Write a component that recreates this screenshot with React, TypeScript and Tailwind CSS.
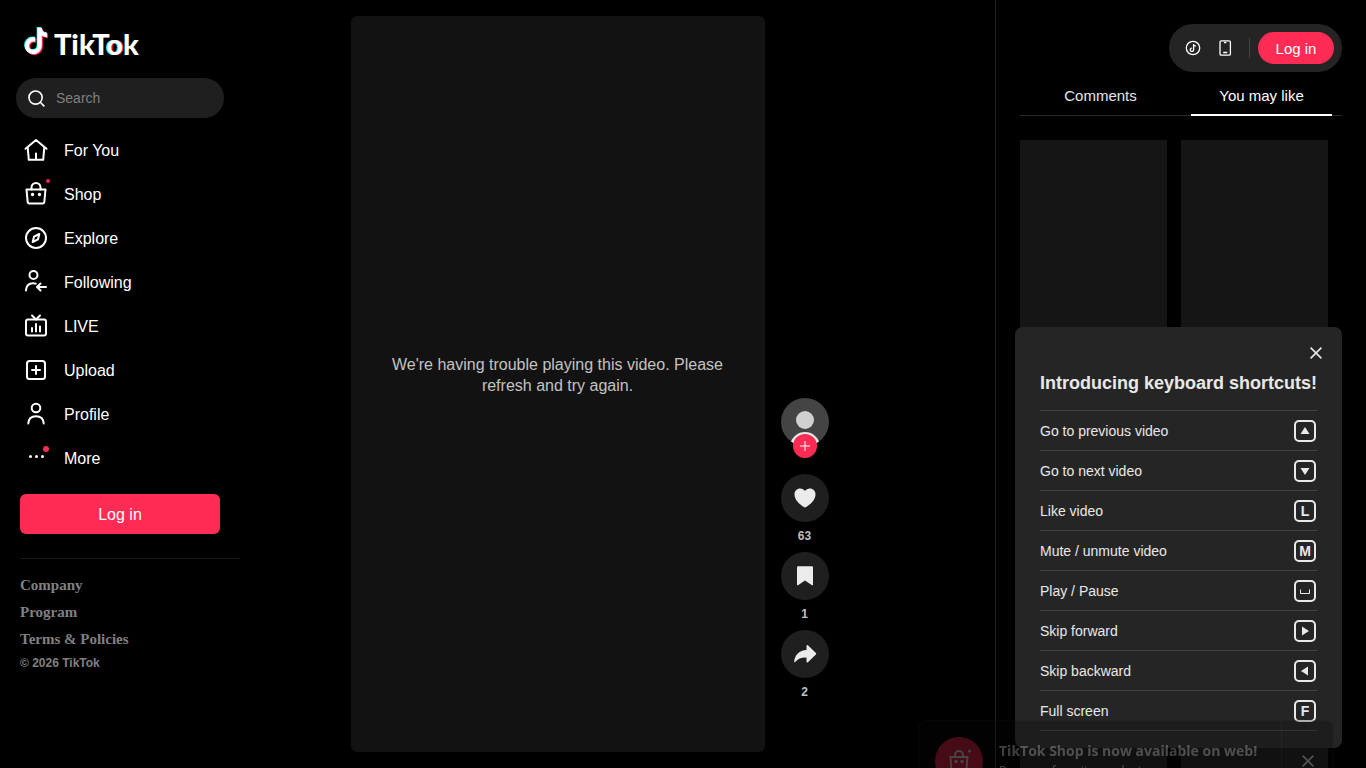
import { useState } from "react";
import type { ReactNode } from "react";

interface NavItem {
  label: string;
  icon: ReactNode;
  dot?: "small" | "large";
}

const NOTE_PATH = "M15.600 .8V18.700a6.300 6.300 0 1 1-6.300-6.300c.7 0 1.200.1 1.800.2M15.600.8c.3 4.200 3.200 7 7.400 7.200";

function NavIcon({ children }: { children: ReactNode }) {
  return (
    <svg
      viewBox="0 0 24 24"
      className="w-6 h-6"
      fill="none"
      stroke="currentColor"
      strokeWidth="2"
      strokeLinecap="round"
      strokeLinejoin="round"
      aria-hidden="true"
    >
      {children}
    </svg>
  );
}

const navItems: NavItem[] = [
  {
    label: "For You",
    icon: (
      <NavIcon>
        <path d="M1.500 10.800 12 2l10.500 8.800M3.700 9.300 4.800 21.800h14.400L20.300 9.300M12 15.500v6" />
      </NavIcon>
    ),
  },
  {
    label: "Shop",
    dot: "small",
    icon: (
      <NavIcon>
        <path d="M2.500 7.500h19l-1.200 12.700a1.300 1.300 0 0 1-1.300 1.200H5a1.300 1.300 0 0 1-1.300-1.200z" />
        <path d="M7.500 7.500V5.500a4.500 4.500 0 0 1 9 0v2" />
        <circle cx="8.500" cy="12.500" r="1.700" fill="currentColor" stroke="none" />
        <circle cx="15.500" cy="12.500" r="1.700" fill="currentColor" stroke="none" />
      </NavIcon>
    ),
  },
  {
    label: "Explore",
    icon: (
      <NavIcon>
        <circle cx="12" cy="12" r="10" />
        <path d="M15.300 8 14 13.300 8.700 16 10 10.700z" />
      </NavIcon>
    ),
  },
  {
    label: "Following",
    icon: (
      <NavIcon>
        <circle cx="9.500" cy="5" r="4" />
        <path d="M2 20.500c.3-4.600 3-7.300 7-7.300 1 0 1.900.1 2.700.5M22 17h-8.500M16.500 13.500 13 17l3.500 3.500" />
      </NavIcon>
    ),
  },
  {
    label: "LIVE",
    icon: (
      <NavIcon>
        <rect x="2" y="5.500" width="20" height="16" rx="2" />
        <path d="m8 1.500 4 4 4-4M8 14v3.500M12 10v7.500M16 12.500v5" />
      </NavIcon>
    ),
  },
  {
    label: "Upload",
    icon: (
      <NavIcon>
        <rect x="3" y="3" width="18" height="18" rx="2.500" />
        <path d="M12 8v8M8 12h8" />
      </NavIcon>
    ),
  },
  {
    label: "Profile",
    icon: (
      <NavIcon>
        <circle cx="12" cy="6" r="4.300" />
        <path d="M4.300 21.500c.3-4.700 3.300-7.300 7.700-7.300s7.400 2.600 7.700 7.300" />
      </NavIcon>
    ),
  },
  {
    label: "More",
    dot: "large",
    icon: (
      <svg viewBox="0 0 24 24" className="w-6 h-6" fill="currentColor" aria-hidden="true">
        <circle cx="6.500" cy="10.500" r="1.500" />
        <circle cx="12.500" cy="10.500" r="1.500" />
        <circle cx="18.500" cy="10.500" r="1.500" />
      </svg>
    ),
  },
];

const shortcuts: { label: string; keyCap: ReactNode }[] = [
  { label: "Go to previous video", keyCap: <Arrow d="M5 1 9.500 8h-9z" /> },
  { label: "Go to next video", keyCap: <Arrow d="M5 9 .5 2h9z" /> },
  { label: "Like video", keyCap: "L" },
  { label: "Mute / unmute video", keyCap: "M" },
  {
    label: "Play / Pause",
    keyCap: (
      <svg viewBox="0 0 10 10" className="w-[10px] h-[10px]" fill="none" stroke="currentColor" aria-hidden="true">
        <path d="M.5 3.500v4h9v-4" />
      </svg>
    ),
  },
  { label: "Skip forward", keyCap: <Arrow d="M2 .5 9 5 2 9.500z" /> },
  { label: "Skip backward", keyCap: <Arrow d="M8 .5 1 5l7 4.500z" /> },
  { label: "Full screen", keyCap: "F" },
];

function Arrow({ d }: { d: string }) {
  return (
    <svg viewBox="0 0 10 10" className="w-[10px] h-[10px]" fill="currentColor" aria-hidden="true">
      <path d={d} />
    </svg>
  );
}

function CloseIcon({ className }: { className: string }) {
  return (
    <svg viewBox="0 0 12 12" className={className} fill="none" stroke="currentColor" strokeWidth="1.600" aria-hidden="true">
      <path d="m.6.6 10.800 10.800M11.400.6.6 11.400" />
    </svg>
  );
}

function Logo() {
  return (
    <a href="#" className="flex items-center h-[42px] px-2 gap-[5px]">
      <svg viewBox="0 -1 25 30" className="w-[25px] h-[30px] shrink-0" fill="none" strokeWidth="4.400" aria-hidden="true">
        <path d={NOTE_PATH} stroke="#25f4ee" transform="translate(-.7 -.7)" />
        <path d={NOTE_PATH} stroke="#fe2c55" transform="translate(1.100 1)" />
        <path d={NOTE_PATH} stroke="#fff" />
      </svg>
      <span className="pt-[6px] font-['Lato',sans-serif] text-[29px] leading-8 font-black">
        TikT<span className="[text-shadow:-1px_0_#25f4ee,1px_0_#fe2c55]">o</span>k
      </span>
    </a>
  );
}

function Sidebar() {
  return (
    <aside className="w-60 shrink-0 pt-5">
      <div className="px-4">
        <Logo />
        <label className="mt-4 flex items-center h-10 rounded-full bg-[#1f1f1f] pl-3 pr-4 gap-[11px]">
          <svg viewBox="0 0 18 18" className="w-[17px] h-[17px] shrink-0" fill="none" stroke="currentColor" strokeWidth="1.700" aria-hidden="true">
            <circle cx="8" cy="8" r="7" />
            <path d="m13 13 4.300 4.300" />
          </svg>
          <input
            type="text"
            aria-label="Search"
            placeholder="Search"
            className="min-w-0 flex-1 bg-transparent text-sm outline-none placeholder:text-[#808080]"
          />
        </label>
      </div>

      <nav className="mt-[10px] px-4">
        {navItems.map((item) => (
          <a key={item.label} href="#" className="flex items-center h-11 px-2 gap-4">
            <span className="relative">
              {item.icon}
              {item.dot === "small" && <span className="absolute -top-[3px] -right-[2px] w-1 h-1 rounded-full bg-[#fe2c55]" />}
              {item.dot === "large" && <span className="absolute top-0 -right-px w-[6px] h-[6px] rounded-full bg-[#fe2c55]" />}
            </span>
            <span className="pt-[2px]">{item.label}</span>
          </a>
        ))}
      </nav>

      <div className="px-5 mt-[14px]">
        <button type="button" className="w-full h-10 pt-[2px] rounded-md bg-[#fe2c55]">Log in</button>
      </div>

      <footer className="ml-5 mt-6 border-t border-[#1a1a1a] pt-[13px] text-[#808080] font-bold">
        <div className="font-['Liberation_Serif',serif] text-[15px] leading-[27px]">
          <a href="#" className="block">Company</a>
          <a href="#" className="block">Program</a>
          <a href="#" className="block">Terms &amp; Policies</a>
        </div>
        <p className="text-xs leading-5">© 2026 TikTok</p>
      </footer>
    </aside>
  );
}

function ActionButton({ label, count, children }: { label: string; count: number; children: ReactNode }) {
  return (
    <div className="flex flex-col items-center">
      <button type="button" aria-label={label} className="w-12 h-12 rounded-full bg-[#1f1f1f] flex items-center justify-center">
        <svg viewBox="0 0 24 24" className="w-6 h-6" fill="#ebebeb" aria-hidden="true">
          {children}
        </svg>
      </button>
      <strong className="h-[30px] leading-7 text-xs text-white/75">{count}</strong>
    </div>
  );
}

function VideoFeed() {
  return (
    <main className="flex-1 min-w-0 flex justify-center gap-4 py-4 pr-14">
      <section className="h-full aspect-9/16 rounded-md bg-[#121212] flex items-center justify-center px-9 pb-[18px]">
        <p className="text-center text-base leading-[21px] text-white/75">
          We're having trouble playing this video. Please refresh and try again.
        </p>
      </section>

      <div className="flex flex-col justify-end pb-[44px]">
        <div className="relative mb-7">
          <a href="#" aria-label="Author profile" className="block">
            <svg viewBox="0 0 48 48" className="w-12 h-12" aria-hidden="true">
              <clipPath id="avatar">
                <circle cx="24" cy="24" r="24" />
              </clipPath>
              <g clipPath="url(#avatar)">
                <rect width="48" height="48" fill="#444" />
                <circle cx="24" cy="22" r="9" fill="#d0d0d0" />
                <circle cx="24" cy="49" r="15" fill="#e8e8e8" />
              </g>
            </svg>
          </a>
          <button
            type="button"
            aria-label="Follow"
            className="absolute top-9 left-3 w-6 h-6 rounded-full bg-[#fe2c55] flex items-center justify-center"
          >
            <svg viewBox="0 0 10 10" className="w-[10px] h-[10px]" stroke="currentColor" aria-hidden="true">
              <path d="M5 0v10M0 5h10" />
            </svg>
          </button>
        </div>
        <ActionButton label="Like" count={63}>
          <path d="M7.200 2.600c2 0 3.800.9 4.800 2.400 1-1.500 2.800-2.400 4.800-2.400 3.300 0 5.700 2.500 5.700 5.800 0 5.400-5 9.800-9.900 12.900a1.100 1.100 0 0 1-1.200 0C6.500 18.200 1.500 13.800 1.500 8.400c0-3.300 2.400-5.800 5.700-5.800z" />
        </ActionButton>
        <ActionButton label="Save" count={1}>
          <path d="M4 3.500A1.300 1.300 0 0 1 5.300 2.200h13.400A1.300 1.300 0 0 1 20 3.500v17.200c0 .6-.6.8-1 .5l-7-4.700-7 4.700c-.4.300-1 .1-1-.5z" />
        </ActionButton>
        <ActionButton label="Share" count={2}>
          <path d="M13.500 3.900c0-.8.8-1.200 1.400-.7l8 7.900c.5.500.5 1 0 1.500l-8 7.700c-.6.500-1.400.1-1.400-.6v-4.300c-5-.2-8.500 1-11.300 4.500-.5.600-1.100.4-1-.4C1.900 12.800 6.200 8.500 13.500 8z" />
        </ActionButton>
      </div>
    </main>
  );
}

function SidePanel() {
  return (
    <aside className="w-[371px] shrink-0 border-l border-[#222] pl-6 pr-6 pt-6 flex flex-col">
      <div className="self-end h-12 rounded-full bg-[#242424] flex items-center pl-4 pr-2">
        <button type="button" aria-label="Get coins" className="w-4 h-4">
          <svg viewBox="0 0 16 16" className="w-4 h-4" fill="none" stroke="currentColor" strokeWidth="1.300" aria-hidden="true">
            <circle cx="8" cy="8" r="6.700" />
            <path d="M8.600 4v5.800a1.700 1.700 0 1 1-1.700-1.700M8.600 4c.2 1.400 1 2.100 2.400 2.200" />
          </svg>
        </button>
        <button type="button" aria-label="Get app" className="w-4 h-4 ml-4">
          <svg viewBox="0 0 16 16" className="w-4 h-4" fill="none" stroke="currentColor" strokeWidth="1.300" aria-hidden="true">
            <rect x="3" y=".8" width="10.400" height="14.400" rx="1.300" />
            <path d="M7 2.500h2.400M6.200 12.500h4" />
          </svg>
        </button>
        <span className="ml-4 mr-2 w-px h-5 bg-[#444]" />
        <button type="button" className="w-[76px] h-8 pt-[2px] rounded-full bg-[#fe2c55] text-[15px]">Log in</button>
      </div>

      <div role="tablist" className="flex h-11 pr-[10px] text-[15px] shadow-[inset_0_-1px_0_#2b2b2b]">
        <button type="button" role="tab" aria-selected="false" className="flex-1 pt-1 text-white/90">
          Comments
        </button>
        <button type="button" role="tab" aria-selected="true" className="w-[141px] ml-[10px] border-b-2 border-white pt-[6px]">
          You may like
        </button>
      </div>

      <div className="mt-6 grid grid-cols-2 gap-[14px] pr-[14px] flex-1">
        <div className="bg-[#151515]" />
        <div className="bg-[#151515]" />
      </div>
    </aside>
  );
}

function ShortcutsDialog({ onClose }: { onClose: () => void }) {
  return (
    <section className="fixed right-6 bottom-5 w-[327px] rounded-lg bg-[#252525] pt-5 pb-[17px] text-white/90">
      <div className="flex justify-end pr-5">
        <button type="button" aria-label="Close" onClick={onClose} className="h-3">
          <CloseIcon className="w-3 h-3" />
        </button>
      </div>
      <div className="px-[25px]">
        <h2 className="pt-[10px] pb-[13px] text-lg leading-7 font-bold whitespace-nowrap">Introducing keyboard shortcuts!</h2>
        <ul className="border-b border-[#444]">
          {shortcuts.map((s) => (
            <li key={s.label} className="flex items-center justify-between h-10 border-t border-[#444] text-sm pr-px">
              <span>{s.label}</span>
              <kbd className="w-[22px] h-[22px] rounded-[5px] border-2 border-[#e8e8e8] flex items-center justify-center font-['Liberation_Sans',sans-serif] text-sm leading-none font-bold">
                {s.keyCap}
              </kbd>
            </li>
          ))}
        </ul>
      </div>
    </section>
  );
}

function ShopToast({ onClose }: { onClose: () => void }) {
  return (
    <section className="fixed right-8 -bottom-[30px] w-[416px] h-[78px] rounded-lg border border-[#1c1c1c] bg-[#0a0a0a] opacity-[0.27] flex pl-4 pt-4">
      <div className="w-12 h-12 rounded-full bg-[#fe2c55] flex items-center justify-center shrink-0">
        <svg viewBox="0 0 24 24" className="w-6 h-6" fill="none" stroke="currentColor" strokeWidth="1.800" aria-hidden="true">
          <path d="M3.500 8h17l-1 13h-15zM8 8V6a4 4 0 0 1 8 0v2" />
          <circle cx="9" cy="12.500" r=".8" />
          <circle cx="15" cy="12.500" r=".8" />
          <circle cx="22.500" cy="2" r=".6" />
        </svg>
      </div>
      <div className="ml-4 flex-1 pt-1 text-sm leading-5 text-white/90 font-['Open_Sans',sans-serif]">
        <p className="font-bold whitespace-nowrap">TikTok Shop is now available on web!</p>
        <p className="text-xs leading-5">Buy your favorite products</p>
      </div>
      <div className="w-[52px] -mt-4 border-l border-[#222] flex justify-center pt-[34px]">
        <button type="button" aria-label="Dismiss" onClick={onClose} className="h-3">
          <CloseIcon className="w-3 h-3" />
        </button>
      </div>
    </section>
  );
}

export default function App() {
  const [showShortcuts, setShowShortcuts] = useState(true);
  const [showToast, setShowToast] = useState(true);

  return (
    <div className="flex h-screen overflow-hidden bg-black text-white text-base font-['Liberation_Sans',Arial,sans-serif]">
      <Sidebar />
      <VideoFeed />
      <SidePanel />
      {showShortcuts && <ShortcutsDialog onClose={() => setShowShortcuts(false)} />}
      {showToast && <ShopToast onClose={() => setShowToast(false)} />}
    </div>
  );
}
